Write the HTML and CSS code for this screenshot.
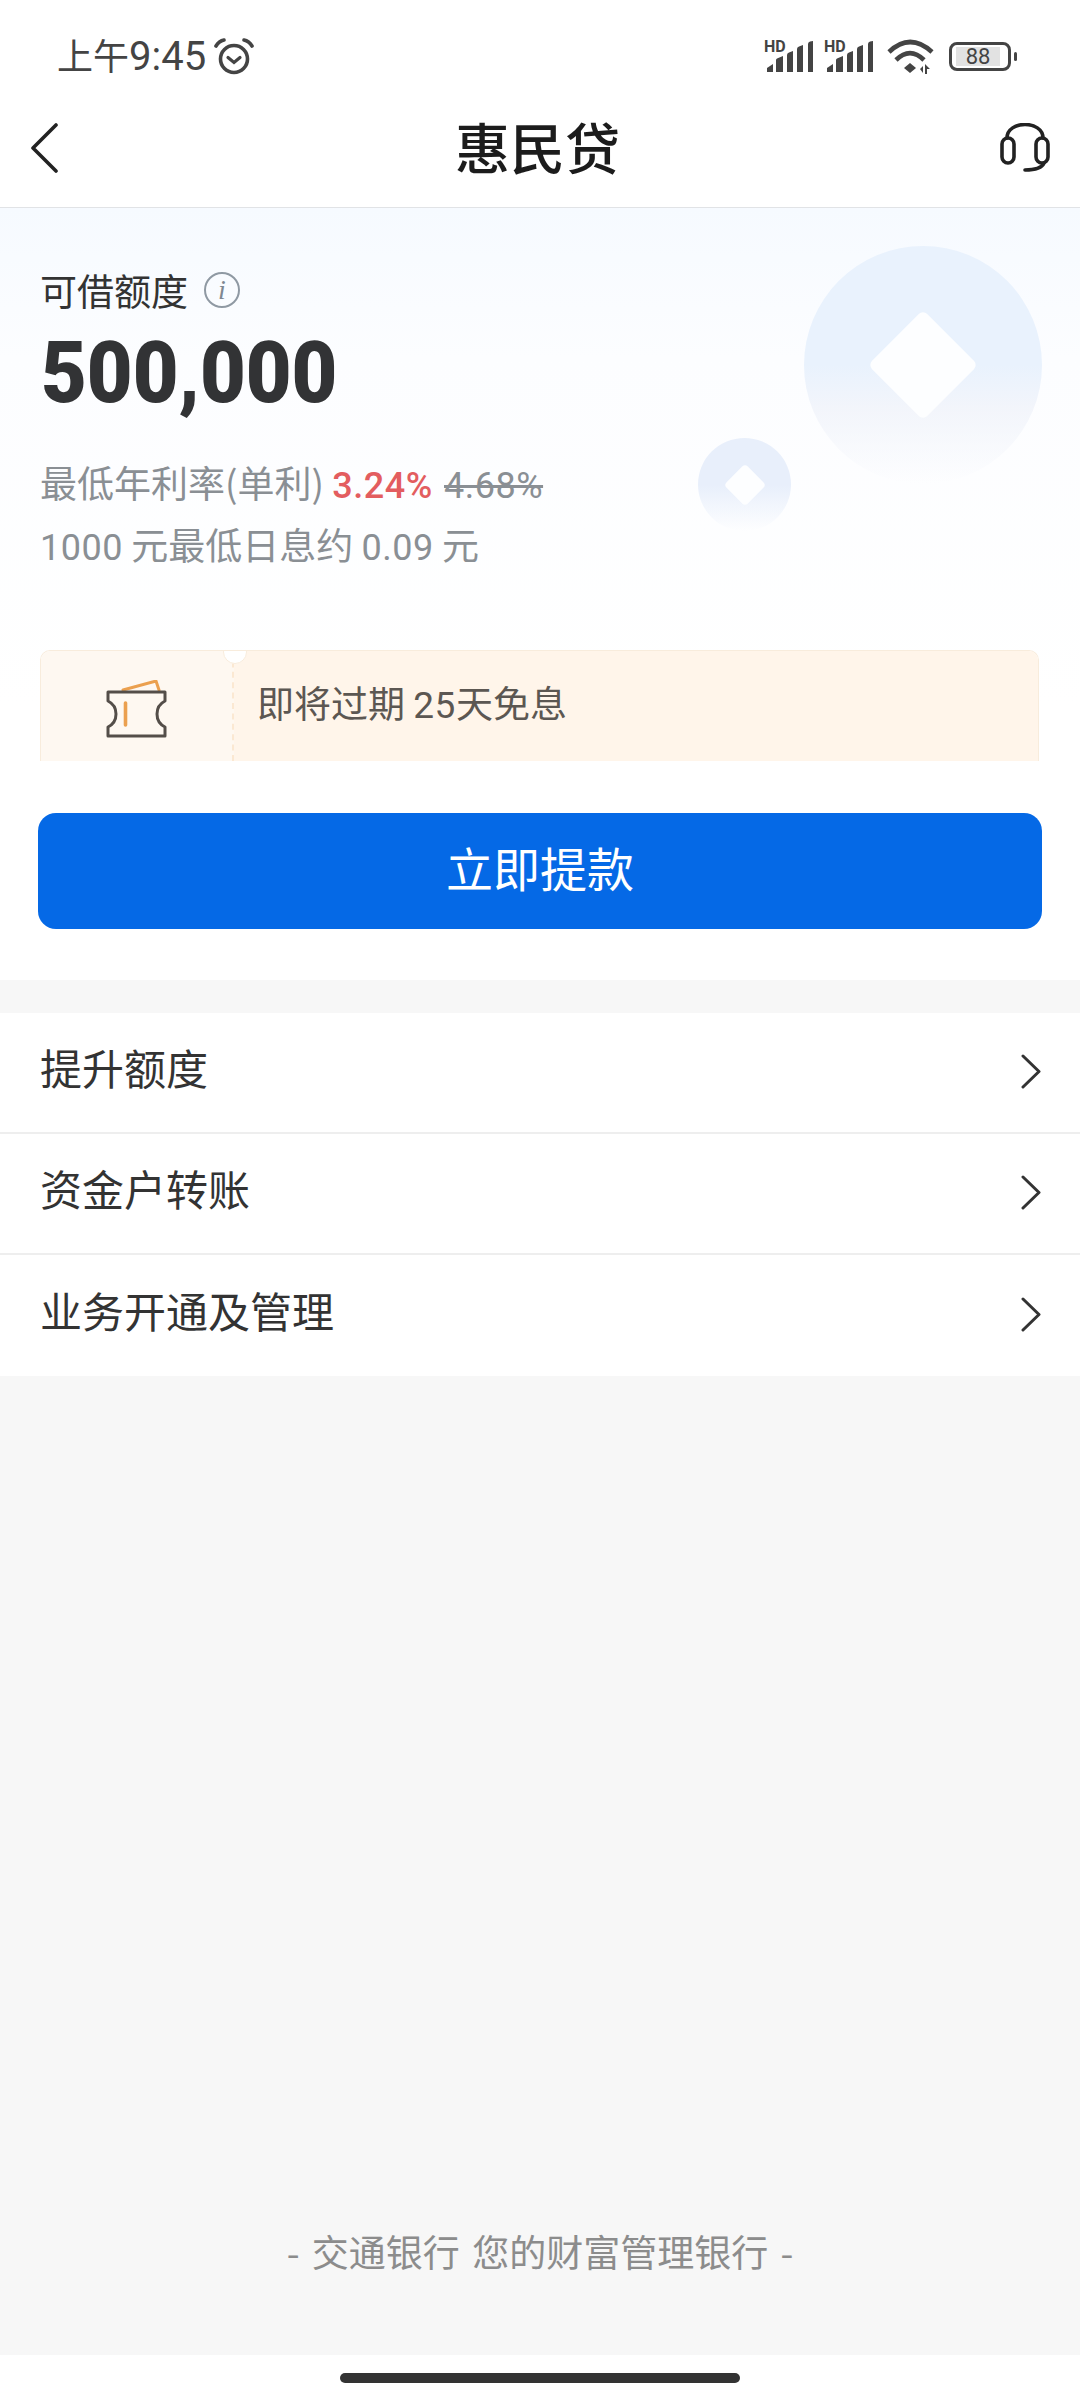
FILE: index.html
```html
<!DOCTYPE html>
<html>
<head>
<meta charset="UTF-8">
<title>惠民贷</title>
<link rel="stylesheet" href="styles.css">
</head>
<body>
	<div class="statusbar">
		<div class="status-left">
			<span class="time">上午<span class="time-num">9:45</span></span>
			<svg class="alarm" width="40" height="37" viewBox="0 0 40 37" fill="none" stroke="#444" stroke-linecap="round">
				<circle cx="20" cy="21" r="13.5" stroke-width="3.6"/>
				<path d="M2 8Q5 3 10 2M30 2Q35 3 38 8" stroke-width="3.6"/>
				<path d="M14 19.500L20 24.500L26 19.500" stroke-width="3.2"/>
			</svg>
		</div>
		<div class="status-right">
			<svg class="signal" width="50" height="36" viewBox="0 -4 50 36" fill="#444">
				<text x="0" y="12" class="hd">HD</text>
				<path d="M3 32V28L9 24V32ZM12 32V20Q12 19 13 18.500L19 16V32ZM23 32V15Q23 13 25 12.500L29 11V32ZM33 32V9Q33 7 35 6.500L39 5V32ZM44 32V4Q44 2 46 1.500L49 1V32Z"/>
			</svg>
			<svg class="signal" width="50" height="36" viewBox="0 -4 50 36" fill="#444">
				<text x="0" y="12" class="hd">HD</text>
				<path d="M3 32V28L9 24V32ZM12 32V20Q12 19 13 18.500L19 16V32ZM23 32V15Q23 13 25 12.500L29 11V32ZM33 32V9Q33 7 35 6.500L39 5V32ZM44 32V4Q44 2 46 1.500L49 1V32Z"/>
			</svg>
			<svg class="wifi" width="47" height="35" viewBox="0 0 47 35" fill="none" stroke="#444">
				<path d="M2 13Q23 -7 45 13" stroke-width="4.600"/>
				<path d="M9 21Q23 7 37 21" stroke-width="4.600"/>
				<path d="M23 24L29 29L23 34L17 29Z" fill="#444" stroke="none"/>
				<path d="M33 30L36 27V34ZM38 25L43 30L40 30V35H38Z" fill="#444" stroke="none"/>
			</svg>
			<div class="battery">
				<div class="battery-body"><span class="battery-level">88</span></div>
				<div class="battery-tip"></div>
			</div>
		</div>
	</div>

	<div class="nav">
		<svg class="back" width="28" height="50" viewBox="0 0 28 50" fill="none" stroke="#222" stroke-width="3.600" stroke-linecap="round" stroke-linejoin="round">
			<path d="M26 2L3 25L26 48"/>
		</svg>
		<div class="nav-title">惠民贷</div>
		<svg class="headset" width="50" height="49" viewBox="0 0 50 49" fill="none" stroke="#222" stroke-width="3.600" stroke-linecap="round">
			<rect x="2" y="15" width="12" height="25" rx="6"/>
			<rect x="36" y="15" width="12" height="25" rx="6"/>
			<path d="M7 15C7 -3 43 -3 43 15"/>
			<path d="M44 40Q41 47 25 47"/>
		</svg>
	</div>

	<div class="hero">
		<div class="deco deco-big"></div>
		<div class="deco deco-small"></div>

		<div class="label">
			可借额度
			<span class="info">i</span>
		</div>
		<div class="amount">500,000</div>
		<div class="rate">最低年利率(单利) <span class="num red">3.24%</span> <span class="num old">4.68%</span></div>
		<div class="rate"><span class="num">1000</span> 元最低日息约 <span class="num">0.09</span> 元</div>

		<div class="ticket">
			<div class="ticket-left">
				<svg width="62" height="58" viewBox="0 0 62 58" fill="none" stroke-linejoin="round" stroke-linecap="round">
					<path d="M17 10L50 1L53 10" stroke="#eba04f" stroke-width="3"/>
					<path d="M2 12H59V21Q51 25 51 34Q51 43 59 47V56H2V47Q10 43 10 34Q10 25 2 21Z" stroke="#544e49" stroke-width="3"/>
					<path d="M19.500 23V45" stroke="#eba04f" stroke-width="3.600"/>
				</svg>
			</div>
			<div class="ticket-right">即将过期 <span class="num">25</span>天免息</div>
		</div>

		<div class="btn">立即提款</div>
	</div>

	<div class="main">
		<div class="list">
			<div class="row">
				<span class="row-text">提升额度</span>
				<svg class="arrow" width="20" height="35" viewBox="0 0 20 35" fill="none" stroke="#333" stroke-width="3" stroke-linecap="round" stroke-linejoin="round"><path d="M2 2L18 17.500L2 33"/></svg>
			</div>
			<div class="row">
				<span class="row-text">资金户转账</span>
				<svg class="arrow" width="20" height="35" viewBox="0 0 20 35" fill="none" stroke="#333" stroke-width="3" stroke-linecap="round" stroke-linejoin="round"><path d="M2 2L18 17.500L2 33"/></svg>
			</div>
			<div class="row">
				<span class="row-text">业务开通及管理</span>
				<svg class="arrow" width="20" height="35" viewBox="0 0 20 35" fill="none" stroke="#333" stroke-width="3" stroke-linecap="round" stroke-linejoin="round"><path d="M2 2L18 17.500L2 33"/></svg>
			</div>
		</div>
		<div class="slogan">- 交通银行 您的财富管理银行 -</div>
	</div>

	<div class="homebar"><div class="homebar-line"></div></div>
</body>
</html>
```

FILE: styles.css
```css
*{
	box-sizing: border-box;
}
body{
	margin: 0;
	width: 1080px;
	height: 2400px;
	display: flex;
	flex-direction: column;
	background-color: #fff;
	color: #333;
	font-family: "Noto Sans CJK SC", "Noto Sans", sans-serif;
}
.num{
	font-family: Roboto, "Noto Sans CJK SC", sans-serif;
	letter-spacing: 0.5px;
}

/* status bar */
.statusbar{
	height: 88px;
	padding: 24px 63px 0 57px;
	display: flex;
	justify-content: space-between;
	align-items: center;
}
.status-left{
	display: flex;
	align-items: center;
	gap: 8px;
}
.time{
	margin-top: 2px;
	font-size: 36px;
	line-height: 40px;
	color: #444;
	font-family: Roboto, "Noto Sans CJK SC", sans-serif;
}
.time-num{
	font-size: 40px;
}
.status-right{
	display: flex;
	align-items: center;
}
.signal{
	margin: -4px 10px 0 0;
}
.hd{
	font: bold 16px Roboto, sans-serif;
}
.wifi{
	margin: 0 15px 0 3px;
}
.battery{
	display: flex;
	align-items: center;
	gap: 3px;
}
.battery-body{
	width: 62px;
	height: 29px;
	border: 3px solid #444;
	border-radius: 8px;
	padding: 2px 8px 2px 4px;
	display: flex;
}
.battery-level{
	flex: 1;
	background-color: #e2e2e2;
	font: 22px/19px Roboto, sans-serif;
	text-align: center;
	color: #444;
}
.battery-tip{
	width: 3px;
	height: 9px;
	border-radius: 2px;
	background-color: #444;
}

/* nav */
.nav{
	height: 120px;
	padding: 0 30px;
	display: flex;
	justify-content: space-between;
	align-items: center;
	border-bottom: 1px solid #e1e3e6;
}
.nav-title{
	font-size: 55px;
	font-weight: 500;
	color: #1c1c1c;
	line-height: 60px;
	margin: 0 0 6px 17px;
}

/* hero */
.hero{
	position: relative;
	height: 772px;
	padding: 62px 38px 0;
	background: linear-gradient(#f6faff, #fcfdff 150px, #fff 500px);
}
.deco{
	position: absolute;
	border-radius: 50%;
	display: flex;
	align-items: center;
	justify-content: center;
}
.deco::after{
	content: "";
	display: block;
	transform: rotate(45deg);
	background-color: #fdfeff;
}
.deco-big{
	top: 38px;
	left: 804px;
	width: 238px;
	height: 238px;
	background: linear-gradient(#e9f2fd 50%, rgba(240,243,250,0.8) 68%, rgba(255,255,255,0) 100%);
}
.deco-big::after{
	width: 78px;
	height: 78px;
	border-radius: 6px;
}
.deco-small{
	top: 230px;
	left: 698px;
	width: 93px;
	height: 93px;
	background: linear-gradient(#e8effb 50%, rgba(255,255,255,0) 100%);
}
.deco-small::after{
	width: 30px;
	height: 30px;
	border-radius: 4px;
}
.label{
	position: relative;
	height: 40px;
	margin-left: 2px;
	display: flex;
	align-items: center;
	gap: 16px;
	font-size: 37px;
}
.info{
	width: 36px;
	height: 36px;
	border: 2.5px solid #8f99a3;
	border-radius: 50%;
	text-align: center;
	font: italic 28px/31px "Liberation Serif", serif;
	color: #7f8891;
}
.amount{
	position: relative;
	height: 104px;
	margin: 11px 0 26px 3px;
	font-family: Roboto, sans-serif;
	font-weight: 900;
	font-size: 86px;
	line-height: 104px;
	color: #323335;
	transform: scaleX(0.92);
	transform-origin: left;
}
.rate{
	position: relative;
	height: 62px;
	margin-left: 2px;
	font-size: 37px;
	line-height: 62px;
	color: #8a8f94;
	white-space: nowrap;
}
.rate .num{
	font-size: 36px;
}
.red{
	color: #e35d5f;
	font-weight: 500;
}
.old{
	margin-left: 3px;
	text-decoration: line-through;
}
.ticket{
	position: relative;
	height: 111px;
	margin: 75px 3px 0 2px;
	display: flex;
	border: 1px solid #f8ecdc;
	border-bottom: 0;
	border-radius: 10px 10px 0 0;
	overflow: hidden;
}
.ticket::before{
	content: "";
	position: absolute;
	top: -11px;
	left: 182px;
	width: 22px;
	height: 22px;
	border-radius: 50%;
	background-color: #fff;
	border: 1px solid #f8ecdc;
}
.ticket-left{
	width: 193px;
	background-color: #fef8f1;
	border-right: 2px dashed #fbe8d2;
	display: flex;
	align-items: center;
	justify-content: center;
	padding-top: 6px;
}
.ticket-right{
	flex: 1;
	background-color: #fff5ea;
	padding-left: 23px;
	font-size: 37px;
	line-height: 102px;
	color: #5c5752;
}
.ticket-right .num{
	font-size: 37px;
}
.btn{
	position: relative;
	height: 116px;
	margin-top: 52px;
	border-radius: 18px;
	background-color: #0569e6;
	color: #fff;
	font-size: 47px;
	line-height: 107px;
	text-align: center;
}

/* list */
.main{
	flex: 1;
	display: flex;
	flex-direction: column;
	background-color: #f7f7f7;
	padding-top: 33px;
}
.list{
	background-color: #fff;
}
.row{
	height: 121px;
	padding: 0 39px 0 40px;
	display: flex;
	justify-content: space-between;
	align-items: center;
	border-bottom: 2px solid #eeeeee;
}
.row:last-child{
	border-bottom: 0;
}
.row-text{
	font-size: 42px;
	margin-bottom: 12px;
}
.arrow{
	margin-bottom: 2px;
}
.slogan{
	margin-top: auto;
	padding-bottom: 79px;
	font-size: 37px;
	line-height: 50px;
	word-spacing: 4px;
	text-align: center;
	color: #8c8c8c;
}
.homebar{
	height: 45px;
	padding-top: 18px;
}
.homebar-line{
	width: 400px;
	height: 10px;
	margin: 0 auto;
	border-radius: 5px;
	background-color: #333;
}
```
